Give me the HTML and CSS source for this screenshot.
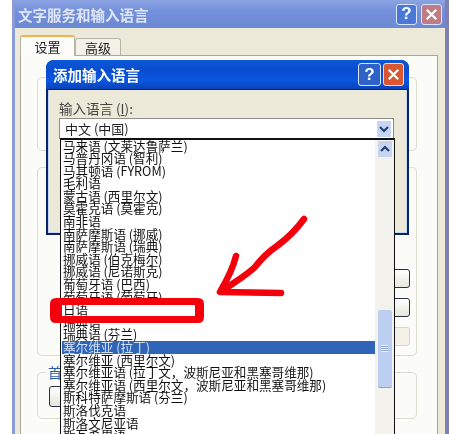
FILE: index.html
```html
<!DOCTYPE html>
<html lang="zh-CN">
<head>
  <meta charset="UTF-8" />
  <title>添加输入语言</title>
  <link rel="stylesheet" href="styles.css">
</head>
<body>
  <div class="screen">

    <!-- back window -->
    <div class="window">
      <div class="titlebar">
        <span class="title">文字服务和输入语言</span>
        <div class="title-btns">
          <span class="tbtn help">?</span>
          <span class="tbtn close">
            <svg viewBox="0 0 20 20"><path d="M5 5 L15 15 M15 5 L5 15" /></svg>
          </span>
        </div>
      </div>
      <div class="client">
        <div class="tabs">
          <div class="tab active">设置</div>
          <div class="tab">高级</div>
        </div>
        <div class="panel">
          <div class="group group-top"></div>
          <div class="group group-mid">
            <div class="side-btn"></div>
            <div class="side-btn"></div>
            <div class="side-btn off"></div>
          </div>
          <div class="group group-low">
            <span class="legend">首选</span>
            <div class="low-btn"></div>
          </div>
        </div>
      </div>
    </div>

    <!-- front dialog -->
    <div class="dialog">
      <div class="dialog-title">
        <span class="title">添加输入语言</span>
        <div class="title-btns">
          <span class="tbtn help">?</span>
          <span class="tbtn close">
            <svg viewBox="0 0 20 20"><path d="M5 5 L15 15 M15 5 L5 15" /></svg>
          </span>
        </div>
      </div>
      <div class="dialog-body">
        <div class="field-label">输入语言 (<u>I</u>):</div>
        <div class="combo">
          <span>中文 (中国)</span>
          <span class="arrow-btn">
            <svg viewBox="0 0 14 14"><path d="M3 5 L7 9 L11 5" /></svg>
          </span>
        </div>
      </div>
    </div>

    <!-- open dropdown -->
    <div class="dropdown">
      <div class="rows">
        <div class="row">马来语 (文莱达鲁萨兰)</div>
        <div class="row">马普丹冈语 (智利)</div>
        <div class="row">马其顿语 (FYROM)</div>
        <div class="row">毛利语</div>
        <div class="row">蒙古语 (西里尔文)</div>
        <div class="row">莫霍克语 (莫霍克)</div>
        <div class="row">南非语</div>
        <div class="row">南萨摩斯语 (挪威)</div>
        <div class="row">南萨摩斯语 (瑞典)</div>
        <div class="row">挪威语 (伯克梅尔)</div>
        <div class="row">挪威语 (尼诺斯克)</div>
        <div class="row">葡萄牙语 (巴西)</div>
        <div class="row">葡萄牙语 (葡萄牙)</div>
        <div class="row">日语</div>
        <div class="row">瑞典语</div>
        <div class="row">瑞典语 (芬兰)</div>
        <div class="row selected">塞尔维亚 (拉丁)</div>
        <div class="row">塞尔维亚 (西里尔文)</div>
        <div class="row">塞尔维亚语 (拉丁文，波斯尼亚和黑塞哥维那)</div>
        <div class="row">塞尔维亚语 (西里尔文，波斯尼亚和黑塞哥维那)</div>
        <div class="row">斯科特萨摩斯语 (芬兰)</div>
        <div class="row">斯洛伐克语</div>
        <div class="row">斯洛文尼亚语</div>
        <div class="row">斯瓦希里语</div>
      </div>
      <div class="scrollbar">
        <span class="arrow-btn">
          <svg viewBox="0 0 14 14"><path d="M3 9 L7 5 L11 9" /></svg>
        </span>
        <div class="thumb"><span class="grip"></span></div>
      </div>
    </div>

    <!-- hand drawn marker over the screenshot -->
    <svg class="marker" viewBox="0 0 449 434">
      <path class="box" fill-rule="evenodd" d="M56 298 H198 Q204 298 204 304 V317 Q204 323 198 323 H56 Q50 323 50 317 V304 Q50 298 56 298 Z M62 305 V316 H195 V305 Z" />
      <path class="arrow" d="M304 219 C296 230 288 238 277 246 C268 252 262 258 255 267 C248 274 238 280 222 291 M236 256 C233 268 227 280 220 292 L281 293" />
    </svg>
  </div>
</body>
</html>
```

FILE: styles.css
```css
* {
  box-sizing: border-box;
}

body {
  margin: 0;
  font-family: "Noto Sans CJK SC", "Liberation Sans", sans-serif;
}

.screen {
  position: relative;
  width: 449px;
  height: 434px;
  overflow: hidden;
  background: #fff;
  filter: blur(0.45px);
}

/* back window */
.window {
  position: absolute;
  left: 12px;
  top: 0;
  width: 437px;
  height: 434px;
  display: flex;
  flex-direction: column;
  background: #ece9d8;
  border-left: 3px solid #8a9bd6;
  border-right: 4px solid #7f7fb8;
}

.titlebar {
  height: 28px;
  flex: none;
  display: flex;
  justify-content: space-between;
  align-items: center;
  padding: 0 0 0 3px;
  background: linear-gradient(180deg, #8ba3e2, #7390dc 40%, #6c88d2);
  color: #dfe6f6;
}

.title {
  font-size: 14.5px;
  font-weight: bold;
}

.title-btns {
  display: flex;
  gap: 4px;
  margin-right: 3px;
}

.tbtn {
  width: 21px;
  height: 21px;
  display: flex;
  align-items: center;
  justify-content: center;
  border: 1px solid #dbe4f6;
  border-radius: 3px;
  color: #fff;
  font-family: "Liberation Sans", sans-serif;
  font-size: 17px;
  font-weight: bold;
}

.tbtn svg {
  width: 100%;
  height: 100%;
}

.tbtn path {
  fill: none;
  stroke: #fff;
  stroke-width: 2.4;
}

.help {
  background: #4a78d6;
}

.close {
  background: #c07c84;
}

.client {
  flex: 1;
  display: flex;
  flex-direction: column;
  padding: 7px 7px 0 5px;
}

.tabs {
  display: flex;
  height: 20px;
  flex: none;
  align-items: flex-end;
  font-size: 13px;
  color: #222;
}

.tab {
  width: 46px;
  height: 17px;
  line-height: 17px;
  text-align: center;
  background: #f4f2e8;
  border: 1px solid #b5b5a8;
  border-bottom: none;
  border-radius: 3px 3px 0 0;
}

.tab.active {
  width: 55px;
  height: 21px;
  line-height: 19px;
  background: #fcfcfa;
  border-top: 2px solid #f0b44a;
  margin-bottom: -1px;
  position: relative;
}

.panel {
  flex: 1;
  display: flex;
  flex-direction: column;
  gap: 16px;
  padding: 21px 20px 0 16px;
  background: #fbfbf8;
  border: 1px solid #a8a89c;
  border-bottom: none;
}

.group {
  position: relative;
  border: 1px solid #dedcd0;
  border-radius: 5px;
  flex: none;
}

.group-top {
  height: 74px;
}

.group-mid {
  height: 189px;
  display: flex;
  flex-direction: column;
  align-items: flex-end;
  gap: 10px;
  padding: 101px 6px 0 0;
}

.group-low {
  height: 47px;
  padding: 13px 0 0 11px;
}

.legend {
  position: absolute;
  left: 8px;
  top: -9px;
  padding: 0 2px;
  background: #fbfbf8;
  font-size: 14px;
  line-height: 16px;
  color: #2b5aa8;
}

.side-btn {
  width: 22px;
  height: 19px;
  background: linear-gradient(180deg, #fff, #e6e6dc);
  border: 1px solid #26314f;
  border-radius: 3px;
}

.side-btn.off {
  background: #f3f1e8;
  border-color: #d8d5c6;
}

.low-btn {
  width: 60px;
  height: 21px;
  background: linear-gradient(180deg, #fff, #e6e6dc);
  border: 1px solid #26314f;
  border-radius: 3px;
}

/* front dialog */
.dialog {
  position: absolute;
  left: 46px;
  top: 60px;
  width: 363px;
  height: 175px;
  display: flex;
  flex-direction: column;
  background: #0a246a;
  border-radius: 8px 8px 0 0;
  padding: 0 2px 2px;
}

.dialog-title {
  height: 30px;
  flex: none;
  margin: 0 -2px;
  padding: 0 5px 0 7px;
  display: flex;
  justify-content: space-between;
  align-items: center;
  border-radius: 8px 8px 0 0;
  border-bottom: 1px solid #0a246a;
  background: linear-gradient(180deg, #0a5ad8, #0a4cd0 35%, #0a58e0 70%, #0a42b8);
  color: #fff;
}

.dialog-title .title-btns {
  gap: 2px;
  margin: 0;
}

.dialog-title .tbtn {
  height: 23px;
}

.dialog-title .help {
  width: 23px;
  background: #2f62c8;
}

.dialog-title .close {
  background: #d9562e;
}

.dialog-body {
  flex: 1;
  padding: 9px 12px 0 10px;
  background: #ece9d8;
  border: 1px solid #c8d6f0;
  border-top: none;
}

.field-label {
  font-size: 13.5px;
  line-height: 18px;
  color: #444;
  margin-bottom: 1px;
}

.combo {
  height: 21px;
  display: flex;
  justify-content: space-between;
  align-items: center;
  padding: 0 2px 0 5px;
  background: #fff;
  border: 1px solid #8f8f8a;
  font-size: 13px;
  color: #222;
}

.arrow-btn {
  width: 14px;
  height: 16px;
  display: flex;
  align-items: center;
  justify-content: center;
  background: #c6d6f2;
  border-radius: 1px;
}

.arrow-btn svg {
  width: 14px;
  height: 14px;
}

.arrow-btn path {
  fill: none;
  stroke: #24406e;
  stroke-width: 2.2;
}

/* open dropdown */
.dropdown {
  position: absolute;
  left: 60px;
  top: 138px;
  width: 335px;
  height: 300px;
  display: flex;
  background: #fff;
  border: 1px solid #111;
  border-top-width: 2px;
}

.rows {
  flex: 1;
  min-width: 0;
  margin-top: -0.5px;
  padding-left: 1px;
  overflow: hidden;
  font-size: 12.6px;
  color: #111;
}

.row {
  height: 12.6px;
  line-height: 12.6px;
  padding-left: 1px;
  white-space: nowrap;
}

.row.selected {
  background: #2f65b8;
  color: #cfe0f5;
}

.scrollbar {
  width: 19px;
  flex: none;
  display: flex;
  flex-direction: column;
  align-items: center;
  padding-top: 1px;
  background: #f3f2ec;
}

.thumb {
  width: 14px;
  height: 78px;
  margin-top: 153px;
  display: flex;
  align-items: center;
  justify-content: center;
  background: #bccff2;
  border-bottom: 1px solid #8fa3c8;
  border-radius: 2px;
}

.grip {
  width: 7px;
  height: 7px;
  background: repeating-linear-gradient(180deg, #eef3fc 0 1px, #8ea6d2 1px 2px);
}

/* red marker */
.marker {
  position: absolute;
  left: 0;
  top: 0;
  width: 449px;
  height: 434px;
  filter: blur(0.7px);
}

.box {
  fill: #f4000c;
}

.arrow {
  fill: none;
  stroke: #f4000c;
  stroke-width: 6.5;
  stroke-linecap: round;
  stroke-linejoin: round;
}
```
